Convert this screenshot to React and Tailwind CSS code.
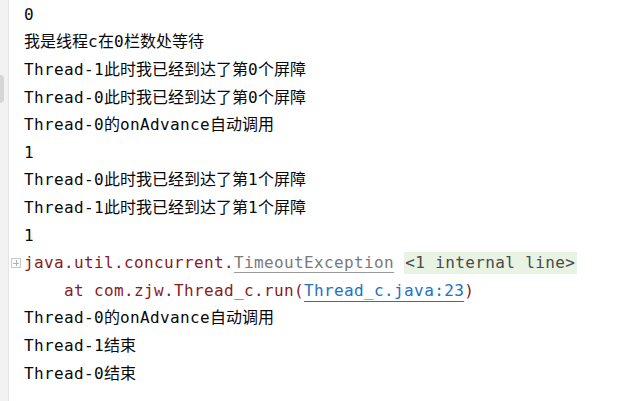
const lines = [
  "0",
  "我是线程c在0栏数处等待",
  "Thread-1此时我已经到达了第0个屏障",
  "Thread-0此时我已经到达了第0个屏障",
  "Thread-0的onAdvance自动调用",
  "1",
  "Thread-0此时我已经到达了第1个屏障",
  "Thread-1此时我已经到达了第1个屏障",
  "1",
];

const tail = ["Thread-0的onAdvance自动调用", "Thread-1结束", "Thread-0结束"];

// CJK glyphs keep their natural width, ascii gets a bit of tracking
const Mixed = ({ text }) => {
  const parts = text.split(/([\u3000-\u9fff]+)/);
  return parts.map((p, i) =>
    /[\u3000-\u9fff]/.test(p) ? (
      <span key={i} className="tracking-normal">
        {p}
      </span>
    ) : (
      <span key={i}>{p}</span>
    )
  );
};

const Line = ({ children, className = "" }) => (
  <div className={`h-[27.6px] flex items-center whitespace-pre ${className}`}>
    {children}
  </div>
);

export default function App() {
  return (
    <div className="w-[622px] h-[401px] bg-white flex overflow-hidden font-['DejaVu_Sans_Mono','Noto_Sans_CJK_SC',monospace] text-[16px] tracking-[0.37px] text-[#080808]">
      {/* gutter */}
      <div className="w-[9px] shrink-0 bg-[#f2f2f2] border-r border-[#e4e4e4] flex flex-col">
        <div className="mt-[75px] w-[4px] h-[28px] rounded-r-sm bg-[#d6d6d6]" />
      </div>

      <div className="flex-1 flex flex-col pl-[15px] pt-[1px]">
        {lines.map((t, i) => (
          <Line key={i}>
            <Mixed text={t} />
          </Line>
        ))}

        <Line className="relative text-[#8b1a1a]">
          <span className="absolute -left-[13px] top-[9px] w-[10px] h-[10px] border border-[#c8c8c8] flex items-center justify-center">
            <span className="absolute w-[6px] h-px bg-[#b0b0b0]" />
            <span className="absolute h-[6px] w-px bg-[#b0b0b0]" />
          </span>
          <span>java.util.concurrent.</span>
          <span className="text-[#7a7a7a] underline underline-offset-4 decoration-[#9a9a9a]">
            TimeoutException
          </span>
          <span> </span>
          <span className="bg-[#e8f3e4] text-[#4a4a4a] h-[22px] flex items-center pl-[1px] pr-[2px]">
            {"<1 internal line>"}
          </span>
        </Line>

        <Line className="text-[#8b1a1a]">
          <span>{"    at com.zjw.Thread_c.run("}</span>
          <span className="text-[#2470c2] underline underline-offset-[5px]">
            Thread_c.java:23
          </span>
          <span>)</span>
        </Line>

        {tail.map((t, i) => (
          <Line key={i}>
            <Mixed text={t} />
          </Line>
        ))}
      </div>
    </div>
  );
}
